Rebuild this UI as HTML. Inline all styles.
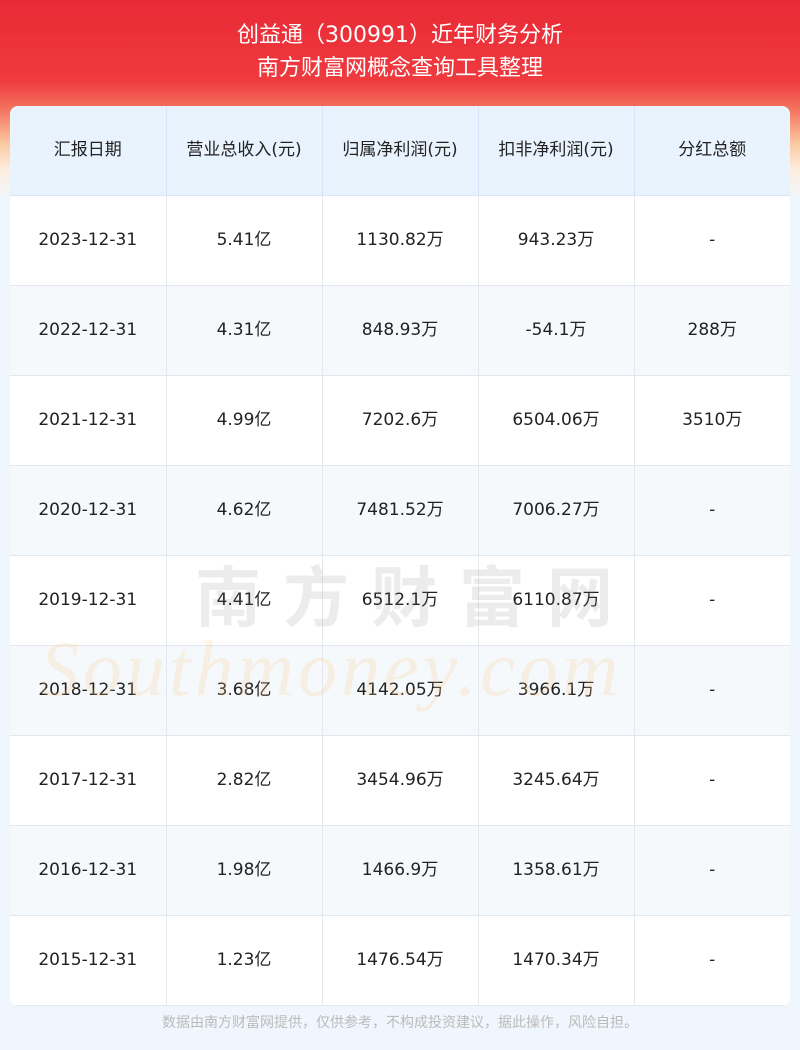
<!DOCTYPE html>
<html><head><meta charset="utf-8"><style>
*{margin:0;padding:0;box-sizing:border-box}
body{width:800px;height:1050px;background:#f0f6fd;font-family:"DejaVu Sans","Noto Sans CJK SC",sans-serif;position:relative;overflow:hidden}
.top{position:absolute;left:0;top:0;width:800px;height:200px;background:linear-gradient(180deg,#e92a36 0%,#ef3a3e 40%,#f4745f 55%,#fbc9a2 72%,#fdeedf 85%,#f0f6fd 100%)}
.t{position:absolute;left:0;width:800px;text-align:center;color:#fff;font-size:22px;line-height:1}
table{position:absolute;left:10px;top:106px;width:780px;border-collapse:collapse;background:#fff;border-radius:8px;overflow:hidden}
td{width:156px;height:90px;text-align:center;font-size:17px;line-height:1;color:#222;border-right:1px solid #e4e8ee;border-bottom:1px solid #e4e8ee;vertical-align:middle}
td:last-child{border-right:none}
tr.h td{background:#e9f3fe;height:89px;border-color:#d6e6f8}
tr:nth-child(odd):not(.h) td{background:#f6f9fb}
.wm{position:absolute;left:195px;top:560px;font-size:66px;line-height:1;color:rgba(120,120,120,.14);letter-spacing:22px;font-weight:bold;font-family:"Noto Sans CJK SC",sans-serif}
.wm2{position:absolute;left:40px;top:630px;font-size:78px;line-height:1;font-style:italic;color:rgba(250,200,140,.22);font-family:"Liberation Serif",serif;letter-spacing:4px}
.f{position:absolute;top:1015px;width:800px;text-align:center;font-size:14px;line-height:1;color:#bbb;font-family:"Noto Sans CJK SC",sans-serif}
</style></head><body>
<div class="top"></div>
<div class="t" style="top:25px">创益通（300991）近年财务分析</div>
<div class="t" style="top:58px">南方财富网概念查询工具整理</div>
<table>
<tr class="h"><td>汇报日期</td><td>营业总收入(元)</td><td>归属净利润(元)</td><td>扣非净利润(元)</td><td>分红总额</td></tr>
<tr><td>2023-12-31</td><td>5.41亿</td><td>1130.82万</td><td>943.23万</td><td>-</td></tr>
<tr><td>2022-12-31</td><td>4.31亿</td><td>848.93万</td><td>-54.1万</td><td>288万</td></tr>
<tr><td>2021-12-31</td><td>4.99亿</td><td>7202.6万</td><td>6504.06万</td><td>3510万</td></tr>
<tr><td>2020-12-31</td><td>4.62亿</td><td>7481.52万</td><td>7006.27万</td><td>-</td></tr>
<tr><td>2019-12-31</td><td>4.41亿</td><td>6512.1万</td><td>6110.87万</td><td>-</td></tr>
<tr><td>2018-12-31</td><td>3.68亿</td><td>4142.05万</td><td>3966.1万</td><td>-</td></tr>
<tr><td>2017-12-31</td><td>2.82亿</td><td>3454.96万</td><td>3245.64万</td><td>-</td></tr>
<tr><td>2016-12-31</td><td>1.98亿</td><td>1466.9万</td><td>1358.61万</td><td>-</td></tr>
<tr><td>2015-12-31</td><td>1.23亿</td><td>1476.54万</td><td>1470.34万</td><td>-</td></tr>
</table>
<div class="wm">南方财富网</div>
<div class="wm2">Southmoney.com</div>
<div class="f">数据由南方财富网提供，仅供参考，不构成投资建议，据此操作，风险自担。</div>
</body></html>
